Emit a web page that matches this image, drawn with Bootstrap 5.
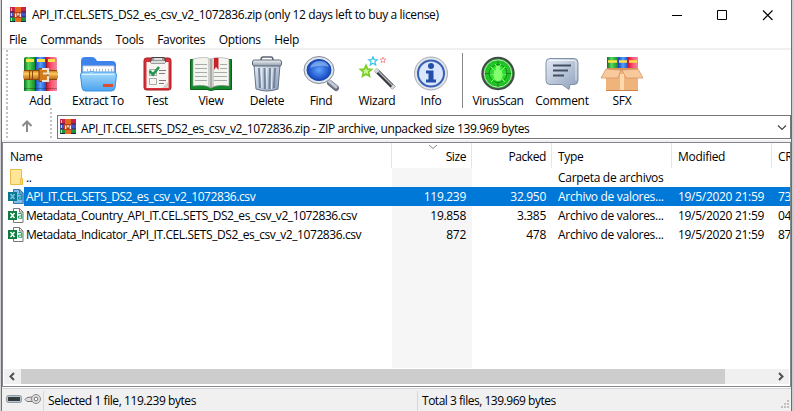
<!DOCTYPE html>
<html lang="es">
<head>
<meta charset="utf-8">
<meta name="viewport" content="width=device-width, initial-scale=1">
<title>API_IT.CEL.SETS_DS2_es_csv_v2_1072836.zip</title>
<link href="https://cdn.jsdelivr.net/npm/bootstrap@5.3.0/dist/css/bootstrap.min.css" rel="stylesheet">
<style>
body{font-family:"Open Sans","Noto Sans",sans-serif;font-size:12px;line-height:19px;color:#000;letter-spacing:-.3px;background:#fff}
.win{width:794px;height:411px;border-left:1px solid #d4d4d4;background:#fff}
.win-in{border-left:1px solid #6e6e6e;border-right:1px solid #6e6e6e;width:791px}
.edge{width:2px;background:#ccc}
.titlebar{height:29px;padding:0 0 0 8px}
.titlebar .cap{margin-left:6px;letter-spacing:-.37px}
.wbtn{width:46px;height:28px}
.menus{height:19px;padding:1px 0 0 7px;letter-spacing:-.32px}
.menus span{margin-right:13.6px}
.rule{height:2px;background:#f0f0f0}
.grip{width:2px;background:repeating-linear-gradient(#c2c2c2 0 2px,transparent 2px 4px)}
.tools{height:58px;padding-left:4px}
.tool-grid{display:grid;grid-template-columns:56px 60px 58px 50px 62px 46px 66px 42px 11px 70px 58px 62px;margin-left:4px}
.tool{padding-top:6px;height:58px;white-space:nowrap}
.tool svg{width:38px;height:38px;flex:none}
.tool.wide svg{width:44px}
.tool.tight{letter-spacing:-.4px}
.tool span{line-height:14px}
.vsep{width:1px;height:55px;background:#888;margin:3px 0 0 10px}
.addr{height:32px;padding-left:4px}
.up{width:42px;padding-top:4px}
.combo{height:24px;margin:7px 0 1px 5px;border:1px solid #767676;padding:0 3px 0 2px}
.combo .cap{margin-left:5px;padding-top:2px;letter-spacing:-.4px}
.list{height:245px;border:1px solid #828790;margin-bottom:1px}
.sheet{height:225px;overflow:hidden;background:linear-gradient(#f6f6f6,#f6f6f6) 389px 25px/80px 200px no-repeat}
.line{display:grid;grid-template-columns:389px 80px 80px 120px 100px 18px;height:19px;line-height:19px;width:787px;overflow:hidden;white-space:nowrap}
.line.head{height:25px;line-height:27px}
.head>div{border-right:1px solid #e5e5e5;height:25px;position:relative}
.head>div:last-child{border:0}
.line>div{padding-left:6px;overflow:hidden}
.line.head>div:first-child{padding-left:7px}
.line>div.n{text-align:right;padding:0 6px 0 0}
.line.head>div.n{padding-right:5px;letter-spacing:-.4px}
.line>.f{display:flex;padding-left:5px}
.f svg{flex:none;width:16px;height:19px}
.f span{padding-left:2px;flex:1;letter-spacing:-.42px}
.sel .f span,.sel>div:not(.f){background:#0078d7;color:#fff}
.head .sort{position:absolute;left:36px;top:1px}
.scroller{height:18px;padding:1px 1px 2px 1px}
.track{background:#f0f0f0;height:15px}
.thumb{width:704px;background:#cdcdcd}
.sb{width:17px}
.status{height:23px;background:#f0f0f0;border-top:1px solid #d5d5d5;letter-spacing:-.43px}
.status .p1{width:374px}
.status .bar{border-left:1px solid #d7d7d7;height:20px;margin-top:2px;padding-left:4px;line-height:20px}
.status .p2{letter-spacing:-.48px}
</style>
</head>
<body class="overflow-hidden">
<svg width="0" height="0" class="position-absolute">
<defs>
<linearGradient id="gr" x2="1"><stop stop-color="#0b6e25"/><stop offset=".4" stop-color="#58d858"/><stop offset="1" stop-color="#128a2c"/></linearGradient>
<linearGradient id="gb" x2="1"><stop stop-color="#143eb0"/><stop offset=".5" stop-color="#57a0ff"/><stop offset="1" stop-color="#1f4cc4"/></linearGradient>
<linearGradient id="gp" x2="1"><stop stop-color="#cc1230"/><stop offset=".5" stop-color="#ff5870"/><stop offset="1" stop-color="#e88ca8"/></linearGradient>
<linearGradient id="go" x2="0" y2="1"><stop stop-color="#b86812"/><stop offset=".35" stop-color="#ffc85a"/><stop offset="1" stop-color="#b4600c"/></linearGradient>
<linearGradient id="gf" x2="0" y2="1"><stop stop-color="#a8dcfc"/><stop offset="1" stop-color="#4ba3ee"/></linearGradient>
<linearGradient id="gs" x2="0" y2="1"><stop stop-color="#f4f6f8"/><stop offset="1" stop-color="#8d99aa"/></linearGradient>
<linearGradient id="gc" x2="1" y2="1"><stop stop-color="#e4ebf5"/><stop offset="1" stop-color="#8d9fba"/></linearGradient>
<radialGradient id="lens"><stop stop-color="#5fa5ff"/><stop offset="1" stop-color="#1444bd"/></radialGradient>
<radialGradient id="vir"><stop stop-color="#3cff3c"/><stop offset="1" stop-color="#14ae18"/></radialGradient>
<symbol id="rar" viewBox="0 0 16 16"><path fill="#c82448" d="M0 0h16v5H0z"/><path fill="#4a50bc" d="M0 5h16v5.500H0z"/><path fill="#16943a" d="M0 10.500h16V15H0z"/><path stroke="#242448" d="M0 5h16M0 10h16M0 14.500h16"/><path stroke="#e8d850" d="M1.500 1v3M1.500 6v3M1.500 11v3"/><path fill="#e46a1c" d="M5 0h6v15H5z"/><path fill="#bb3d16" d="M4 5h8v6H4z"/><path fill="none" stroke="#fff" stroke-width="1.300" d="M5.700 10V6.500M10.300 10V6.500M8 6v2.500"/></symbol>
<symbol id="csv" viewBox="0 0 16 19"><path fill="#fff" stroke="#777" d="M5.500 2.500h6l3.500 3.500v10.500H5.500z"/><path fill="none" stroke="#777" d="M11.500 2.500V6H15"/><path fill="#107c41" d="M0 5h9v9H0z"/><path stroke="#fff" stroke-width="1.500" d="M2.500 7l4 5M6.500 7l-4 5"/><path fill="none" stroke="#21a366" stroke-width="1.100" d="M10.300 7.500h2.500q1 0 1 1v3.800h-2.500q-1-.2-1-1.200t1-1.100h2.500"/></symbol>
<path id="star" d="M0-7 2-2.300 7-2 3.200 1.400 4.400 6.500 0 3.700-4.400 6.500-3.200 1.400-7-2-2-2.300z"/>
</defs></svg>

<div class="win d-flex">
<main class="win-in d-flex flex-column">
<header class="titlebar d-flex align-items-center">
<svg width="16" height="16"><use href="#rar"/></svg>
<span class="cap flex-grow-1">API_IT.CEL.SETS_DS2_es_csv_v2_1072836.zip (only 12 days left to buy a license)</span>
<svg class="wbtn" viewBox="0 0 46 28"><path stroke="#000" d="M19 14.500h10"/></svg>
<svg class="wbtn" viewBox="0 0 46 28"><path fill="none" stroke="#000" d="M18.500 9.500h9v9h-9z"/></svg>
<svg class="wbtn" viewBox="0 0 46 28"><path stroke="#000" stroke-width="1.100" d="M18 9.500l9.500 9.500M27.500 9.500L18 19"/></svg>
</header>
<nav class="menus d-flex"><span>File</span><span>Commands</span><span>Tools</span><span>Favorites</span><span>Options</span><span>Help</span></nav>
<div class="rule"></div>

<section class="tools d-flex">
<i class="grip"></i>
<div class="tool-grid">
<div class="tool d-flex flex-column align-items-center"><svg viewBox="0 0 38 38"><path fill="url(#gr)" d="M3 3q0-2 2-2h9v34H3z"/><path fill="url(#gb)" d="M14 1h11v34H14z"/><path fill="url(#gp)" d="M25 1h9q2 0 2 2v32H25z"/><path stroke="#ffe14a" stroke-width="3" d="M5 4.500h8M16 4.500h8M27 4.500h7"/><path stroke="#111" stroke-opacity=".3" d="M3 32.500h33M14.500 3v32M25.500 3v32"/><path fill="url(#go)" d="M3 14h32l2 2v6l-2 2H3l-1-3v-4z"/><path fill="none" stroke="#8b4a0c" d="M3 14.500h33M3 23.500h33M8.500 15v8M11.500 15v8"/><path fill="#d27a1c" stroke="#7b3d08" d="M18 12.500h9v13h-9z"/><path fill="none" stroke="#ebe6dc" stroke-width="2.200" d="M21 13h6v4.500h-5M27 20v5h-6"/></svg><span>Add</span></div>
<div class="tool tight d-flex flex-column align-items-center"><svg viewBox="0 0 38 38"><path fill="#3e83ec" d="M2 5q0-4 4-4h7q3 0 5 4h15q4 0 4 4v20H2z"/><path fill="#fff" stroke="#ccd" d="M4 10h31v16H4z"/><path stroke="#aeb6c2" stroke-width="2.500" stroke-dasharray="1 2" d="M8 14h26"/><path fill="url(#gf)" stroke="#3b94e6" d="M1.500 19q0-3 3-3H10q3-1 5 0h19.500q3 0 3 3L36 32q-.5 3-3.500 3h-26Q3.500 35 3 32z"/><path fill="none" stroke="#d8f2ff" d="M3 18.500h32"/><path fill="#dd4b32" d="M24 28h10v3H24z"/></svg><span>Extract To</span></div>
<div class="tool d-flex flex-column align-items-center"><svg viewBox="0 0 38 38"><rect x="6" y="2" width="27" height="32" rx="2.500" fill="#d93038" stroke="#aa1b25"/><path fill="#f6f5f2" d="M8.500 6h22v26h-22z"/><path fill="#d3d2ce" d="M24 32l6-6v6z"/><path fill="#999" stroke="#444" d="M13 3q0-1.500 2-1.500h10q2 0 2 1.500v4H13z"/><path stroke="#ddd" stroke-width="2" d="M13 6h14M16 3h8"/><path stroke="#aaa" fill="none" d="M11.500 13.500h7v6h-7zM11.500 22.500h7v6h-7z"/><path stroke="#8a7779" d="M21 14.500h7M21 17.500h6M21 24.500h7M21 27.500h5"/><path fill="none" stroke="#20974d" stroke-width="2.600" d="M11.500 15l3.500 3.500L21 11"/></svg><span>Test</span></div>
<div class="tool wide d-flex flex-column align-items-center"><svg viewBox="0 0 44 38"><path fill="#14892c" stroke="#086018" d="M1.500 3.500h41v30H26q-4 2-8 0H1.500z"/><path fill="#f5f5ef" stroke="#999" stroke-width=".6" d="M4 3q12-3 18 0 6-3 18 0v27q-12-2-18 2-6-4-18-2z"/><path fill="#aaa" fill-opacity=".5" d="M19 3h6v28l-3 1-3-1z"/><path stroke="#888" d="M22 3v29"/><path fill="none" stroke="#aaa" d="M6 8.500h12M6 12.500h12M6 16.500h12M6 20.500h12M6 24.500h12M25 16.500h13M25 20.500h13M25 24.500h13M31 8.500h7M31 12.500h7"/><path fill="#c5222b" d="M25 2h4.500v12L27 11l-2 3z"/></svg><span>View</span></div>
<div class="tool d-flex flex-column align-items-center"><svg viewBox="0 0 38 38"><path fill="none" stroke="#5b6674" stroke-width="1.600" d="M13 4q0-3 2-3h8q2 0 2 3"/><path fill="url(#gc)" stroke="#657488" d="M6 9h26l-2 24q-11 4-22 0z"/><path stroke="#72839a" stroke-width="2" d="M11 12l1 20M16.500 12l.5 21M22 12l-.5 21M27 12l-1 20"/><path stroke="#e7eff7" d="M13 12l1 20M18.500 12l.5 21M24 12l-.5 21"/><rect x="4.500" y="4" width="29" height="6" rx="2" fill="url(#gs)" stroke="#5d6875"/></svg><span>Delete</span></div>
<div class="tool d-flex flex-column align-items-center"><svg viewBox="0 0 38 38"><path stroke="#69717c" stroke-width="6" stroke-linecap="round" d="M28 27l6 5"/><path stroke="#bfc7d0" stroke-width="3" stroke-linecap="round" d="M27 25l7 6"/><ellipse cx="17" cy="14" rx="15" ry="13.500" fill="#e0e5ec" stroke="#818b9a"/><ellipse cx="17" cy="14" rx="12" ry="10.500" fill="url(#lens)" stroke="#1648ad"/><path fill="#b5d8ff" fill-opacity=".5" d="M8 12q2-7 10-7 7 0 9 6-10-3-19 1z"/></svg><span>Find</span></div>
<div class="tool d-flex flex-column align-items-center"><svg viewBox="0 0 38 38"><path stroke="#363940" stroke-width="4.500" d="M18 14l18 18"/><path stroke="#b8bcc0" stroke-width="1.500" d="M18 13l18 18"/><path stroke="#d8d8d8" stroke-width="4" d="M17 13l3 3M34 30l2 2"/><g fill="#fff" stroke-width="2"><use href="#star" transform="translate(8 15) scale(.8)" stroke="#79cd24" fill="#c9f597"/><use href="#star" transform="translate(15 5) scale(.6)" stroke="#33c6ea"/><use href="#star" transform="translate(25 4) scale(.4)" stroke="#ee7782"/></g></svg><span>Wizard</span></div>
<div class="tool d-flex flex-column align-items-center"><svg viewBox="0 0 38 38"><circle cx="19" cy="17.500" r="16.500" fill="#e1e4e8" stroke="#a7adb6"/><circle cx="19" cy="17.500" r="13" fill="#d9e6fb" stroke="#3760b5" stroke-width="2"/><circle cx="19" cy="10" r="3" fill="#234faa"/><path fill="#234faa" d="M14 14.500h7.500v9H24v3H14v-3h2.500v-6H14z"/></svg><span>Info</span></div>
<div><div class="vsep"></div></div>
<div class="tool tight d-flex flex-column align-items-center"><svg viewBox="0 0 38 38"><circle cx="19" cy="17.500" r="15.700" fill="url(#vir)" stroke="#454b48" stroke-width="2"/><circle cx="19" cy="17.500" r="13.700" fill="none" stroke="#d0dbd0"/><circle cx="19" cy="17.500" r="9" fill="none" stroke="#118519"/><path stroke="#11861b" d="M19 5v26M6 17.500h26"/><g fill="#83ff70" stroke="#83ff70"><ellipse cx="19" cy="19" rx="4" ry="6"/><circle cx="19" cy="12" r="2"/><path fill="none" d="M12 11l4 4M26 11l-4 4M11 18h16M12 26l4-4M26 26l-4-4M16 8l2 3M22 8l-2 3"/></g></svg><span>VirusScan</span></div>
<div class="tool d-flex flex-column align-items-center"><svg viewBox="0 0 38 38"><path fill="url(#gc)" stroke="#8291a9" d="M7 2.500h24q4 0 4 4v18q0 4-4 4h-4l-1 5-7-5H7q-4 0-4-4v-18q0-4 4-4z"/><path fill="none" stroke="#fff" stroke-opacity=".7" d="M6 4.500h26q1 0 1 2v18"/><path stroke="#435064" stroke-width="1.800" d="M10 9.500h18M10 14.500h15M10 19.500h11"/></svg><span>Comment</span></div>
<div class="tool wide d-flex flex-column align-items-center"><svg viewBox="0 0 44 38"><path fill="url(#gr)" d="M7 1h11v15H7z"/><path fill="url(#gb)" d="M18 1h10v15H18z"/><path fill="url(#gp)" d="M28 1h10v15H28z"/><path stroke="#ffe14a" stroke-width="2.500" d="M8 5.500h9M19 5.500h8M29 5.500h8"/><path fill="#efb47c" d="M6 13h32v21H6z"/><path fill="#d9935c" d="M7 12h30l1 3H6z"/><path fill="#f7c99d" stroke="#d18e5c" stroke-width=".7" d="M6 13l-5 9h17l3-8zM38 13l5 9H26l-4-8z"/><path fill="#ffd8ad" d="M20 18h4v16h-4z"/><path stroke="#cb834e" d="M6 34.500h32"/></svg><span>SFX</span></div>
</div>
</section>

<section class="addr d-flex">
<i class="grip"></i>
<div class="up d-flex align-items-center justify-content-center"><svg width="14" height="14" viewBox="0 0 14 14"><path fill="none" stroke="#8a8a8a" stroke-width="2" d="M3 13V3M-1.500 7L3 2.500 7.500 7" transform="translate(2)"/></svg></div>
<i class="grip"></i>
<div class="combo d-flex flex-grow-1 align-items-center"><svg width="16" height="16"><use href="#rar"/></svg><span class="cap flex-grow-1">API_IT.CEL.SETS_DS2_es_csv_v2_1072836.zip - ZIP archive, unpacked size 139.969 bytes</span><svg width="10" height="8" viewBox="0 0 10 8"><path fill="none" stroke="#444" stroke-width="1.200" d="M1 2.500l4 4 4-4"/></svg></div>
</section>
<div class="rule"></div>

<section class="list">
<div class="sheet">
<div class="line head"><div>Name</div><div class="n">Size<svg class="sort" width="10" height="6" viewBox="0 0 10 6"><path fill="none" stroke="#888" d="M1 1l4 3.500L9 1"/></svg></div><div class="n">Packed</div><div>Type</div><div>Modified</div><div>CRC32</div></div>
<div class="line"><div class="f"><svg viewBox="0 0 16 19"><path fill="#ffe598" stroke="#e8bd48" d="M2.500 1.500h11v15h-11z"/><path fill="#ffdd78" stroke="#e8bd48" d="M12.500 10.500h2v6h-2z"/></svg><span>..</span></div><div class="n"></div><div class="n"></div><div>Carpeta de archivos</div><div></div><div></div></div>
<div class="line sel"><div class="f"><svg viewBox="0 0 16 19"><use href="#csv" width="16" height="19"/><path fill="#0078d7" fill-opacity=".5" d="M0 5h5V2h7l4 4v11H5v-3H0z"/></svg><span>API_IT.CEL.SETS_DS2_es_csv_v2_1072836.csv</span></div><div class="n">119.239</div><div class="n">32.950</div><div>Archivo de valores...</div><div>19/5/2020 21:59</div><div>73</div></div>
<div class="line"><div class="f"><svg><use href="#csv" width="16" height="19"/></svg><span>Metadata_Country_API_IT.CEL.SETS_DS2_es_csv_v2_1072836.csv</span></div><div class="n">19.858</div><div class="n">3.385</div><div>Archivo de valores...</div><div>19/5/2020 21:59</div><div>04</div></div>
<div class="line"><div class="f"><svg><use href="#csv" width="16" height="19"/></svg><span>Metadata_Indicator_API_IT.CEL.SETS_DS2_es_csv_v2_1072836.csv</span></div><div class="n">872</div><div class="n">478</div><div>Archivo de valores...</div><div>19/5/2020 21:59</div><div>87</div></div>
</div>
<div class="scroller"><div class="track d-flex"><svg class="sb" viewBox="0 0 17 15"><path fill="none" stroke="#505050" stroke-width="2" d="M10 4L6.500 7.500 10 11"/></svg><div class="thumb"></div><svg class="sb ms-auto" viewBox="0 0 17 15"><path fill="none" stroke="#505050" stroke-width="2" d="M7 4l3.500 3.500L7 11"/></svg></div></div>
</section>

<footer class="status d-flex">
<svg width="41" height="22" viewBox="0 0 41 22"><rect x="4.500" y="6.500" width="15" height="7" rx="2" fill="#b8c7ce" stroke="#8e9ba2"/><path fill="#343c3e" d="M6 8h12v4H6z"/><path fill="#ddd" stroke="#777" d="M30 8l-5 .5-2 2 2 2h6"/><circle cx="34" cy="10" r="4.500" fill="#ddd" stroke="#888"/><circle cx="34" cy="10" r="1.800" fill="#fff" stroke="#777"/></svg>
<div class="bar p1">Selected 1 file, 119.239 bytes</div>
<div class="bar p2 flex-grow-1">Total 3 files, 139.969 bytes</div>
<svg class="align-self-end" width="11" height="11" viewBox="0 0 11 11"><path fill="#bfbfbf" d="M7 0h2v2H7zM4 3h2v2H4zM7 3h2v2H7zM1 6h2v2H1zM4 6h2v2H4zM7 6h2v2H7z"/></svg>
</footer>
</main>
<div class="edge"></div>
</div>
<script src="https://cdn.jsdelivr.net/npm/bootstrap@5.3.0/dist/js/bootstrap.bundle.min.js"></script>
</body>
</html>
